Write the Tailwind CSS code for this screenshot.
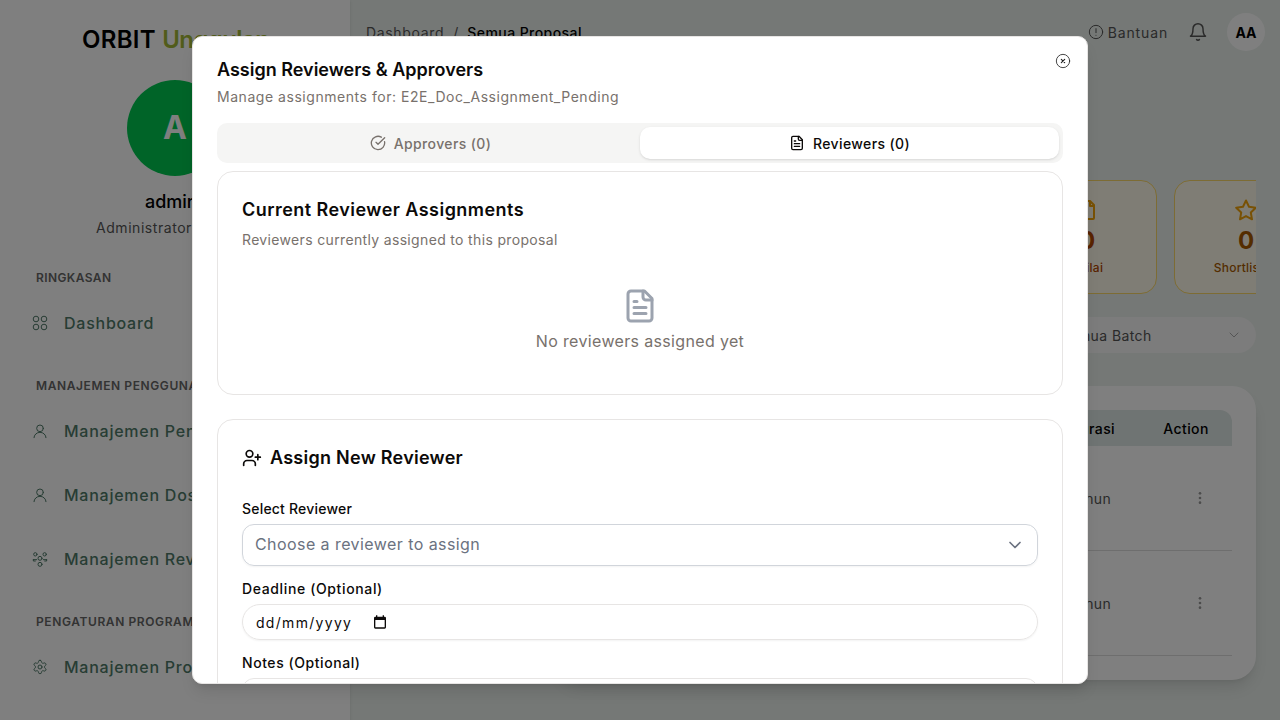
<!DOCTYPE html>
<html lang="en">
<head>
    <meta charset="UTF-8">
    <title>Assign Reviewers</title>
    <script src="https://cdn.jsdelivr.net/npm/@tailwindcss/browser@4"></script>
</head>
<body class="font-['Inter',sans-serif]">
    <div class="relative flex h-[720px] w-[1280px] overflow-hidden bg-[#eaf0ec]">

        <!-- sidebar -->
        <aside class="flex h-[720px] w-[350px] shrink-0 flex-col overflow-hidden bg-white shadow-sm">
            <div class="pt-[24px] pl-[82px] text-[24px] leading-[32px] font-semibold tracking-[0.3px] whitespace-nowrap text-black">ORBIT <span class="tracking-[-0.6px] text-[#a3b837]">Unggulan</span></div>
            <div class="mt-[24px] ml-[127px] flex h-[96px] w-[96px] items-center justify-center rounded-full bg-[#00c951] text-[32px] font-bold text-white">A</div>
            <div class="mt-[12px] pl-[145px] text-[18px] leading-[28px] font-medium text-black">admin</div>
            <div class="pl-[96px] text-[14px] leading-[24px] tracking-[0.55px] text-[#555]">Administrator</div>

            <div class="mt-[28px] pl-[36px] text-[12px] leading-[20px] font-semibold tracking-[0.4px] text-[#666]">RINGKASAN</div>
            <div class="mt-[23px] flex items-center gap-[16px] pl-[32px] text-[16px] leading-[24px] font-medium tracking-[0.75px] text-[#4f7a69]">
                <svg class="h-4 w-4" viewBox="0 0 24 24" fill="none" stroke="currentColor" stroke-width="1.5"><circle cx="6" cy="6" r="4.2"/><circle cx="18" cy="6" r="4.2"/><circle cx="6" cy="18" r="4.2"/><circle cx="18" cy="18" r="4.2"/></svg>
                Dashboard
            </div>

            <div class="mt-[41px] pl-[36px] text-[12px] leading-[20px] font-semibold tracking-[0.6px] whitespace-nowrap text-[#666]">MANAJEMEN PENGGUNA</div>
            <div class="mt-[23px] flex items-center gap-[16px] pl-[32px] text-[16px] leading-[24px] font-medium tracking-[0.75px] whitespace-nowrap text-[#4f7a69]">
                <svg class="h-4 w-4" viewBox="0 0 24 24" fill="none" stroke="currentColor" stroke-width="1.5" stroke-linecap="round"><circle cx="12" cy="8" r="5"/><path d="M3 22a9 8 0 0 1 18 0"/></svg>
                Manajemen Pengguna
            </div>
            <div class="mt-[40px] flex items-center gap-[16px] pl-[32px] text-[16px] leading-[24px] font-medium tracking-[0.75px] whitespace-nowrap text-[#4f7a69]">
                <svg class="h-4 w-4" viewBox="0 0 24 24" fill="none" stroke="currentColor" stroke-width="1.5" stroke-linecap="round"><circle cx="12" cy="8" r="5"/><path d="M3 22a9 8 0 0 1 18 0"/></svg>
                Manajemen Dosen
            </div>
            <div class="mt-[40px] flex items-center gap-[16px] pl-[32px] text-[16px] leading-[24px] font-medium tracking-[0.75px] whitespace-nowrap text-[#4f7a69]">
                <svg class="h-4 w-4" viewBox="0 0 24 24" fill="none" stroke="currentColor" stroke-width="1.5" stroke-linecap="round"><circle cx="5" cy="5" r="2.5"/><circle cx="19" cy="5" r="2.5"/><circle cx="12" cy="11" r="3"/><path d="M2 13h5M17 13h5M2 13v2h3M22 13v2h-3"/><circle cx="12" cy="20" r="3"/></svg>
                Manajemen Reviewer
            </div>

            <div class="mt-[41px] pl-[36px] text-[12px] leading-[20px] font-semibold tracking-[0.6px] whitespace-nowrap text-[#666]">PENGATURAN PROGRAM</div>
            <div class="mt-[23px] flex items-center gap-[16px] pl-[32px] text-[16px] leading-[24px] font-medium tracking-[0.75px] whitespace-nowrap text-[#4f7a69]">
                <svg class="h-4 w-4" viewBox="0 0 24 24" fill="none" stroke="currentColor" stroke-width="1.5" stroke-linecap="round" stroke-linejoin="round"><path d="M12.2 2h-.4a2 2 0 0 0-2 2v.2a2 2 0 0 1-1 1.7l-.4.3a2 2 0 0 1-2 0l-.2-.1a2 2 0 0 0-2.7.7l-.2.4a2 2 0 0 0 .7 2.7l.2.1a2 2 0 0 1 1 1.7v.6a2 2 0 0 1-1 1.7l-.2.1a2 2 0 0 0-.7 2.7l.2.4a2 2 0 0 0 2.7.7l.2-.1a2 2 0 0 1 2 0l.4.3a2 2 0 0 1 1 1.7v.2a2 2 0 0 0 2 2h.4a2 2 0 0 0 2-2v-.2a2 2 0 0 1 1-1.7l.4-.3a2 2 0 0 1 2 0l.2.1a2 2 0 0 0 2.7-.7l.2-.4a2 2 0 0 0-.7-2.7l-.2-.1a2 2 0 0 1-1-1.7v-.6a2 2 0 0 1 1-1.7l.2-.1a2 2 0 0 0 .7-2.7l-.2-.4a2 2 0 0 0-2.7-.7l-.2.1a2 2 0 0 1-2 0l-.4-.3a2 2 0 0 1-1-1.7V4a2 2 0 0 0-2-2z"/><circle cx="12" cy="12" r="3"/></svg>
                Manajemen Program
            </div>
        </aside>

        <!-- main -->
        <main class="flex min-w-0 flex-1 flex-col pr-[24px] pl-[16px]">
            <div class="flex h-[64px] items-center justify-between">
                <div class="flex items-center gap-[8px] text-[14px] whitespace-nowrap">
                    <span class="tracking-[0.67px] text-[#555]">Dashboard</span>
                    <span class="mx-[1px] text-[#555]">/</span>
                    <span class="font-medium tracking-[0.43px] text-black">Semua Proposal</span>
                </div>
                <div class="-mr-[9px] flex items-center">
                    <svg class="h-4 w-4 text-[#555]" viewBox="0 0 24 24" fill="none" stroke="currentColor" stroke-width="1.5" stroke-linecap="round"><circle cx="12" cy="12" r="10"/><path d="M12 7v6M12 17h.01"/></svg>
                    <span class="ml-[4px] text-[14px] tracking-[0.85px] text-[#555]">Bantuan</span>
                    <svg class="ml-[20px] h-5 w-5 text-[#555]" viewBox="0 0 24 24" fill="none" stroke="currentColor" stroke-width="1.75" stroke-linecap="round" stroke-linejoin="round"><path d="M6 8a6 6 0 0 1 12 0c0 7 3 9 3 9H3s3-2 3-9"/><path d="M10.3 21a2 2 0 0 0 3.4 0"/></svg>
                    <div class="ml-[19px] flex h-[38px] w-[38px] items-center justify-center rounded-full bg-white text-[14px] font-bold text-black">AA</div>
                </div>
            </div>

            <!-- stat cards -->
            <div class="mt-[116px] flex h-[114px] justify-end gap-[17px] overflow-hidden">
                <div class="flex h-[114px] w-[140px] shrink-0 flex-col items-center rounded-[16px] border border-[#fbd968] bg-[#fffbeb] pt-[17px]">
                    <svg class="h-6 w-6 text-[#f0a30a]" viewBox="0 0 24 24" fill="none" stroke="currentColor" stroke-width="2" stroke-linejoin="round"><path d="M7 3h8l4 4v13a1 1 0 0 1-1 1H6a1 1 0 0 1-1-1V5a2 2 0 0 1 2-2z"/><path d="M15 3v5h4"/></svg>
                    <div class="mt-[3px] text-[24px] leading-[32px] font-bold text-[#b34700]">0</div>
                    <div class="mt-[3px] ml-[6px] text-[12px] leading-[16px] font-medium tracking-[0.3px] text-[#b34700]">Nilai</div>
                </div>
                <div class="-mr-[62px] flex h-[114px] w-[144px] shrink-0 flex-col items-center rounded-[16px] border border-[#fbd968] bg-[#fffbeb] pt-[17px]">
                    <svg class="h-6 w-6 text-[#f0a30a]" viewBox="0 0 24 24" fill="none" stroke="currentColor" stroke-width="2" stroke-linejoin="round"><path d="m12 2.500 3 6.200 6.800 1-5 4.800 1.200 6.800-6-3.200-6 3.200 1.200-6.800-5-4.800 6.800-1z"/></svg>
                    <div class="mt-[3px] text-[24px] leading-[32px] font-bold text-[#a85a00]">0</div>
                    <div class="mt-[3px] text-[12px] leading-[16px] font-medium tracking-[0.2px] text-[#a85a00]">Shortlisted</div>
                </div>
            </div>

            <!-- batch filter -->
            <div class="mt-[23px] flex justify-end">
                <div class="flex h-[36px] w-[210px] items-center justify-between rounded-full bg-[#f8f8f8] pr-[14px] pl-[14px] text-[14px] tracking-[0.4px] text-[#555]">
                    Semua Batch
                    <svg class="h-4 w-4 text-[#aaa]" viewBox="0 0 24 24" fill="none" stroke="currentColor" stroke-width="1.5" stroke-linecap="round" stroke-linejoin="round"><path d="m6 9 6 6 6-6"/></svg>
                </div>
            </div>

            <!-- table -->
            <div class="mt-[33px] ml-auto h-[294px] w-[700px] rounded-[24px] bg-white p-[24px] shadow-lg">
                <div class="flex h-[36px] items-center justify-end rounded-t-[12px] bg-[#dfe8e6] text-[14px] font-medium tracking-[0.4px] text-black">
                    <span>Durasi</span>
                    <span class="ml-[25px] w-[92px] text-center">Action</span>
                </div>
                <div class="flex h-[105px] items-center justify-end border-b border-[#dcdcdc] text-[14px] tracking-[0.3px] text-[#555]">
                    <span>1 Tahun</span>
                    <span class="w-[44px]"></span>
                    <svg class="mr-[24px] ml-[37px] h-4 w-4 text-[#999]" viewBox="0 0 24 24" fill="currentColor"><circle cx="12" cy="5" r="2"/><circle cx="12" cy="12" r="2"/><circle cx="12" cy="19" r="2"/></svg>
                </div>
                <div class="flex h-[105px] items-center justify-end border-b border-[#dcdcdc] text-[14px] tracking-[0.3px] text-[#555]">
                    <span>1 Tahun</span>
                    <span class="w-[44px]"></span>
                    <svg class="mr-[24px] ml-[37px] h-4 w-4 text-[#999]" viewBox="0 0 24 24" fill="currentColor"><circle cx="12" cy="5" r="2"/><circle cx="12" cy="12" r="2"/><circle cx="12" cy="19" r="2"/></svg>
                </div>
            </div>
        </main>

        <!-- modal -->
        <div class="absolute inset-0 flex items-center justify-center bg-black/50">
            <div class="relative flex h-[648px] w-[896px] flex-col gap-[8px] overflow-hidden rounded-[10px] border border-[#e7e5e4] bg-white p-[24px] shadow-lg">
                <svg class="absolute top-[16px] right-[16px] h-4 w-4 text-[#222]" viewBox="0 0 24 24" fill="none" stroke="currentColor" stroke-width="1.25" stroke-linecap="round"><circle cx="12" cy="12" r="10"/><path d="m9.500 9.500 5 5M14.500 9.500l-5 5" stroke-width="1.75"/></svg>

                <div class="shrink-0 text-[18px] leading-[18px] font-semibold text-[#0c0a09]">Assign Reviewers &amp; Approvers</div>
                <div class="mb-[8px] shrink-0 text-[14px] leading-[20px] tracking-[0.54px] text-[#78716c]">Manage assignments for: E2E_Doc_Assignment_Pending</div>

                <div class="grid h-[40px] shrink-0 grid-cols-2 rounded-[10px] bg-[#f5f5f4] p-[4px]">
                    <div class="flex items-center justify-center gap-[8px] text-[14px] font-medium tracking-[0.38px] text-[#78716c]">
                        <svg class="h-4 w-4" viewBox="0 0 24 24" fill="none" stroke="currentColor" stroke-width="2" stroke-linecap="round" stroke-linejoin="round"><path d="M21.800 10A10 10 0 1 1 17 3.300"/><path d="m9 11 3 3L22 4"/></svg>
                        Approvers (0)
                    </div>
                    <div class="flex items-center justify-center gap-[8px] rounded-[10px] bg-white text-[14px] font-medium tracking-[0.38px] text-[#0c0a09] shadow-sm">
                        <svg class="h-4 w-4" viewBox="0 0 24 24" fill="none" stroke="currentColor" stroke-width="2" stroke-linecap="round" stroke-linejoin="round"><path d="M15 2H6a2 2 0 0 0-2 2v16a2 2 0 0 0 2 2h12a2 2 0 0 0 2-2V7z"/><path d="M14 2v4a2 2 0 0 0 2 2h4"/><path d="M10 9H8M16 13H8M16 17H8"/></svg>
                        Reviewers (0)
                    </div>
                </div>

                <!-- current assignments -->
                <div class="h-[224px] shrink-0 rounded-[16px] border border-[#e7e5e4] p-[24px]">
                    <div class="text-[18px] leading-[28px] font-semibold tracking-[0.46px] text-[#0c0a09]">Current Reviewer Assignments</div>
                    <div class="mt-[6px] text-[14px] leading-[20px] tracking-[0.34px] text-[#78716c]">Reviewers currently assigned to this proposal</div>
                    <div class="mt-[38px] flex flex-col items-center">
                        <svg class="h-[36px] w-[36px] text-[#9ca3af]" viewBox="0 0 24 24" fill="none" stroke="currentColor" stroke-width="2" stroke-linecap="round" stroke-linejoin="round"><path d="M15 2H6a2 2 0 0 0-2 2v16a2 2 0 0 0 2 2h12a2 2 0 0 0 2-2V7z"/><path d="M14 2v4a2 2 0 0 0 2 2h4"/><path d="M10 9H8M16 13H8M16 17H8"/></svg>
                        <div class="mt-[5px] text-[16px] leading-[24px] tracking-[0.34px] text-[#78716c]">No reviewers assigned yet</div>
                    </div>
                </div>

                <!-- new assignment -->
                <div class="mt-[16px] flex-1 rounded-t-[16px] border border-[#e7e5e4] p-[24px]">
                    <div class="flex items-center gap-[8px]">
                        <svg class="h-5 w-5 text-[#0c0a09]" viewBox="0 0 24 24" fill="none" stroke="currentColor" stroke-width="2" stroke-linecap="round" stroke-linejoin="round"><path d="M16 21v-2a4 4 0 0 0-4-4H6a4 4 0 0 0-4 4v2"/><circle cx="9" cy="7" r="4"/><path d="M19 8v6M22 11h-6"/></svg>
                        <div class="text-[18px] leading-[28px] font-semibold tracking-[0.26px] text-[#0c0a09]">Assign New Reviewer</div>
                    </div>
                    <div class="mt-[27px] text-[14px] leading-[20px] font-medium tracking-[0.2px] text-[#0c0a09]">Select Reviewer</div>
                    <div class="mt-[5px] flex h-[42px] items-center justify-between rounded-[12px] border border-[#d1d5db] pr-[12px] pb-[2px] pl-[12px] text-[16px] tracking-[0.43px] text-[#6b7280] shadow-xs">
                        Choose a reviewer to assign
                        <svg class="mt-[2px] h-5 w-5 text-[#6b7280]" viewBox="0 0 24 24" fill="none" stroke="currentColor" stroke-width="2" stroke-linecap="round" stroke-linejoin="round"><path d="m6 9 6 6 6-6"/></svg>
                    </div>
                    <div class="mt-[13px] text-[14px] leading-[20px] font-medium tracking-[0.63px] text-[#0c0a09]">Deadline (Optional)</div>
                    <div class="mt-[5px] flex h-[36px] items-center rounded-full border border-[#e7e5e4] pl-[13px] text-[14px] tracking-[1.3px] text-[#0c0a09] shadow-xs">
                        dd/mm/yyyy
                        <svg class="ml-[20px] h-4 w-4" viewBox="0 0 24 24" fill="currentColor"><path d="M19 4h-1V2h-2v2H8V2H6v2H5a2 2 0 0 0-2 2v14a2 2 0 0 0 2 2h14a2 2 0 0 0 2-2V6a2 2 0 0 0-2-2zm0 16H5V9h14z"/></svg>
                    </div>
                    <div class="mt-[13px] text-[14px] leading-[20px] font-medium tracking-[0.56px] text-[#0c0a09]">Notes (Optional)</div>
                    <div class="mt-[5px] h-[80px] rounded-[12px] border border-[#e7e5e4]"></div>
                </div>
            </div>
        </div>
    </div>
</body>
</html>
